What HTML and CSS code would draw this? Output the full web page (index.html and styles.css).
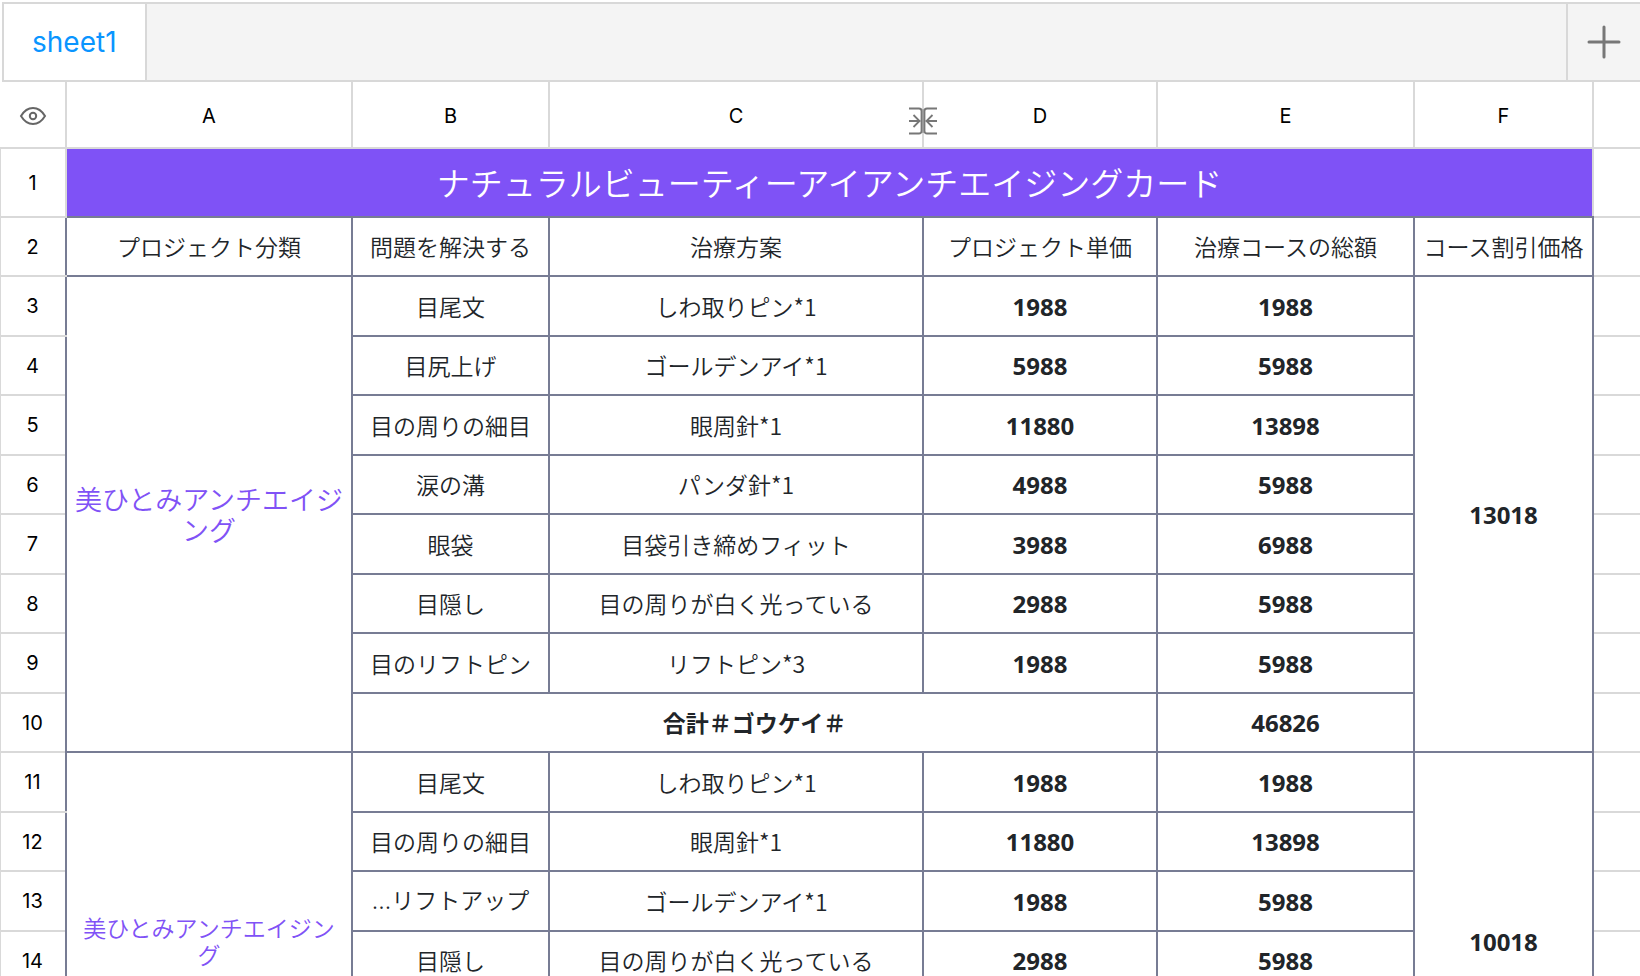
FILE: index.html
```html
<!doctype html>
<html lang="ja">
<head>
  <meta charset="utf-8">
  <title>sheet1</title>
  <link rel="stylesheet" href="styles.css">
</head>
<body>

  <div class="tabbar">
    <button class="tab">sheet1</button>
    <button class="add" aria-label="+">
      <svg width="34" height="34" viewBox="0 0 34 34"><path d="M17 2v30M2 17h30"/></svg>
    </button>
  </div>

  <table class="sheet">
    <colgroup>
      <col class="col-num">
      <col class="col-a">
      <col class="col-b">
      <col class="col-c">
      <col class="col-d">
      <col class="col-e">
      <col class="col-f">
      <col>
    </colgroup>
    <thead>
      <tr>
        <th>
          <svg class="eye" width="28" height="20" viewBox="0 0 28 20">
            <path d="M2 10C5 5 9.500 2 14 2s9 3 12 8c-3 5-7.500 8-12 8S5 15 2 10z"/>
            <circle cx="14" cy="10" r="3.200"/>
          </svg>
        </th>
        <th>A</th>
        <th>B</th>
        <th>C</th>
        <th class="resizable">D
          <svg class="resize" width="28" height="28" viewBox="0 0 28 28">
            <path class="bar" d="M14 2v24"/>
            <path d="M0 1.500h10q2.500 0 2.500 2.500v20q0 2.500-2.500 2.500H0M28 1.500H18q-2.500 0-2.500 2.500v20q0 2.500 2.500 2.500h10M0 14h10M4.500 8l6 6-6 6M28 14H18M23.500 8l-6 6 6 6"/>
          </svg>
        </th>
        <th>E</th>
        <th>F</th>
        <th></th>
      </tr>
    </thead>
    <tbody>
      <tr class="title-row"><th>1</th><td class="title" colspan="6">ナチュラルビューティーアイアンチエイジングカード</td><td class="blank"></td></tr>
      <tr><th>2</th><td>プロジェクト分類</td><td>問題を解決する</td><td>治療方案</td><td>プロジェクト単価</td><td>治療コースの総額</td><td>コース割引価格</td><td class="blank"></td></tr>
      <tr><th>3</th><td class="group big" rowspan="8">美ひとみアンチエイジング</td><td>目尾文</td><td>しわ取りピン*1</td><td class="num">1988</td><td class="num">1988</td><td class="num" rowspan="8">13018</td><td class="blank"></td></tr>
      <tr><th>4</th><td>目尻上げ</td><td>ゴールデンアイ*1</td><td class="num">5988</td><td class="num">5988</td><td class="blank"></td></tr>
      <tr><th>5</th><td>目の周りの細目</td><td>眼周針*1</td><td class="num">11880</td><td class="num">13898</td><td class="blank"></td></tr>
      <tr><th>6</th><td>涙の溝</td><td>パンダ針*1</td><td class="num">4988</td><td class="num">5988</td><td class="blank"></td></tr>
      <tr><th>7</th><td>眼袋</td><td>目袋引き締めフィット</td><td class="num">3988</td><td class="num">6988</td><td class="blank"></td></tr>
      <tr><th>8</th><td>目隠し</td><td>目の周りが白く光っている</td><td class="num">2988</td><td class="num">5988</td><td class="blank"></td></tr>
      <tr><th>9</th><td>目のリフトピン</td><td>リフトピン*3</td><td class="num">1988</td><td class="num">5988</td><td class="blank"></td></tr>
      <tr><th>10</th><td class="total" colspan="3">合計＃ゴウケイ＃</td><td class="num">46826</td><td class="blank"></td></tr>
      <tr><th>11</th><td class="group" rowspan="6">美ひとみアンチエイジング</td><td>目尾文</td><td>しわ取りピン*1</td><td class="num">1988</td><td class="num">1988</td><td class="num" rowspan="6">10018</td><td class="blank"></td></tr>
      <tr><th>12</th><td>目の周りの細目</td><td>眼周針*1</td><td class="num">11880</td><td class="num">13898</td><td class="blank"></td></tr>
      <tr><th>13</th><td class="latin">…リフトアップ</td><td>ゴールデンアイ*1</td><td class="num">1988</td><td class="num">5988</td><td class="blank"></td></tr>
      <tr><th>14</th><td>目隠し</td><td>目の周りが白く光っている</td><td class="num">2988</td><td class="num">5988</td><td class="blank"></td></tr>
      <tr><th></th><td></td><td></td><td></td><td></td><td class="blank"></td></tr>
      <tr class="last"><th></th><td></td><td></td><td></td><td></td><td class="blank"></td></tr>
    </tbody>
  </table>

</body>
</html>
```
FILE: styles.css
```css
html, body {
  height: 100%;
}
body {
  margin: 0;
  overflow: hidden;
  background: #fff;
  font-family: "Noto Sans CJK JP", sans-serif;
  color: #212529;
}

/* sheet tabs */
.tabbar {
  display: flex;
  justify-content: space-between;
  box-sizing: border-box;
  height: 80px;
  margin: 2px 0 0 2px;
  border: 2px solid #d8d8d8;
  border-right: none;
  background: #f4f4f4;
}
.tab, .add {
  border: none;
  padding: 0 28px;
  cursor: pointer;
}
.tab {
  background: #fff;
  border-right: 2px solid #d8d8d8;
  color: #0a95ff;
  font-family: Inter, sans-serif;
  font-size: 28px;
}
.add {
  display: flex;
  align-items: center;
  padding: 0 19px;
  background: none;
  border-left: 2px solid #d8d8d8;
}
.add svg {
  fill: none;
  stroke: #777;
  stroke-width: 3;
  stroke-linecap: round;
}

/* grid */
.sheet {
  width: 100%;
  table-layout: fixed;
  border-collapse: collapse;
}
.col-num { width: 66px; }
.col-a { width: 286px; }
.col-b { width: 197px; }
.col-c { width: 374px; }
.col-d { width: 234px; }
.col-e { width: 257px; }
.col-f { width: 179px; }

th, td {
  box-sizing: border-box;
  padding: 0;
  text-align: center;
  vertical-align: middle;
}
th {
  border: 2px solid #d9d9d9;
  color: #000;
  font-family: Inter, sans-serif;
  font-size: 20px;
  font-weight: 400;
}
thead th {
  height: 66px;
  padding-top: 2px;
  border-top: none;
}
tr > th:first-child {
  border-left: none;
}
tr > :last-child {
  border-right: none;
}
tbody th {
  border-right: none;
  box-shadow: inset 1px 0 #d9d9d9;
}
tbody tr {
  height: 60px;
}
tbody tr:nth-child(even) {
  height: 59px;
}
tbody tr.title-row {
  height: 69px;
}
tbody tr.last {
  height: 80px;
}
td {
  border: 2px solid #777c94;
  font-size: 23px;
  font-weight: 350;
  line-height: 27px;
  white-space: nowrap;
}
td.title {
  padding-bottom: 2px;
  border-top-color: #d9d9d9;
  border-left-color: #d9d9d9;
  border-right-color: #d9d9d9;
  background: #7f52f6;
  color: #fff;
  font-size: 33px;
  line-height: 40px;
}
td.blank {
  border-color: #d9d9d9;
  border-left: none;
}
td.group {
  padding: 0 6px;
  color: #8052f6;
  white-space: normal;
}
td.big {
  font-size: 27px;
  line-height: 31px;
}
td.latin {
  font-family: Inter, "Noto Sans CJK JP", sans-serif;
}
td.num {
  font-family: "Noto Sans", sans-serif;
  font-size: 24px;
  font-weight: 700;
}
td.total {
  font-weight: 700;
}

.eye {
  display: block;
  margin: 0 auto;
  fill: none;
  stroke: #666;
  stroke-width: 2;
}
.resizable {
  position: relative;
}
.resize {
  position: absolute;
  left: -15px;
  top: 25px;
  fill: none;
  stroke: #777;
  stroke-width: 1.8;
}
.resize .bar {
  stroke: #aaa;
}
```
